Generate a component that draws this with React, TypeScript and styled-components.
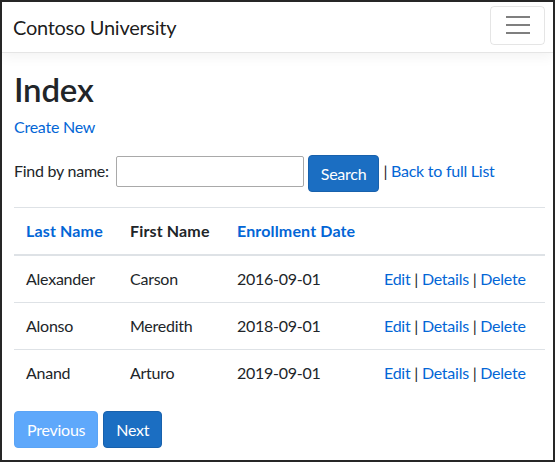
import React from "react";
import styled, { createGlobalStyle } from "styled-components";

const Global = createGlobalStyle`
  html, body { margin: 0; padding: 0; background: #fff; }
  body {
    font-family: Lato, "Noto Sans", "Liberation Sans", sans-serif;
    font-size: 16px;
    letter-spacing: -0.25px;
    color: #212529;
  }
  * { box-sizing: border-box; }
`;

const Frame = styled.div`
  width: 555px;
  height: 462px;
  border: 2px solid #262626;
  display: flex;
  flex-direction: column;
  overflow: hidden;
  background: #fff;
`;

const Navbar = styled.header`
  height: 51px;
  flex: none;
  display: flex;
  align-items: center;
  justify-content: space-between;
  padding: 0 8px 0 11px;
  border-bottom: 1px solid #e5e5e5;
  box-shadow: 0 4px 12px rgba(0, 0, 0, 0.05);
`;

const Brand = styled.a`
  font-size: 20px;
  line-height: 30px;
  letter-spacing: -0.28px;
  color: rgba(0, 0, 0, 0.9);
  text-decoration: none;
  margin-top: -1px;
`;

const Toggler = styled.button`
  width: 55px;
  height: 39px;
  margin-top: -4px;
  border: 1px solid rgba(0, 0, 0, 0.1);
  border-radius: 4px;
  background: transparent;
  display: flex;
  flex-direction: column;
  align-items: center;
  justify-content: center;
  gap: 6px;
  padding: 0;
`;

const Bar = styled.span`
  display: block;
  width: 24px;
  height: 2px;
  background: rgba(0, 0, 0, 0.5);
`;

const Main = styled.main`
  padding: 0 8px 0 12px;
  display: flex;
  flex-direction: column;
`;

const Title = styled.h1`
  margin: 16px 0 0;
  font-size: 33px;
  line-height: 41px;
  font-weight: 600;
  letter-spacing: -0.2px;
`;

const Link = styled.a`
  color: #0366d6;
  text-decoration: none;
`;

const CreateLine = styled.p`
  margin: 5px 0 0;
  line-height: 24px;
`;

const SearchForm = styled.form`
  margin-top: 16px;
  display: flex;
  align-items: flex-start;
  line-height: 24px;
`;

const Label = styled.label`
  margin-top: 4px;
  margin-right: 7px;
`;

const TextInput = styled.input`
  width: 188px;
  height: 31px;
  margin-top: 1px;
  border: 1px solid #a9a9a9;
  border-radius: 2px;
  font: inherit;
  padding: 0 4px;
`;

const Btn = styled.button<{ $light?: boolean }>`
  height: 37px;
  padding: 0 12px;
  border: 1px solid ${(p) => (p.$light ? "#5aa4f6" : "#1861ac")};
  border-radius: 4px;
  background: ${(p) => (p.$light ? "#5ea8fb" : "#1b6ec2")};
  color: #fff;
  font: inherit;
  letter-spacing: inherit;
  line-height: 24px;
`;

const SearchBtn = styled(Btn)`
  margin-left: 4px;
`;

const After = styled.span`
  margin-top: 4px;
  margin-left: 4px;
`;

const Table = styled.table`
  margin-top: 15px;
  width: 531px;
  border-collapse: collapse;
  table-layout: fixed;
  line-height: 24px;
`;

const Th = styled.th<{ $w: number }>`
  width: ${(p) => p.$w}px;
  text-align: left;
  font-weight: 700;
  letter-spacing: 0.15px;
  padding: 11px 12px;
  border-top: 1px solid #dee2e6;
  border-bottom: 2px solid #dee2e6;
`;

const Td = styled.td`
  padding: 11px 12px 11px;
  border-top: 1px solid #dee2e6;
  white-space: nowrap;
`;

const Pager = styled.div`
  margin-top: 15px;
  display: flex;
  gap: 5px;
`;

const students = [
  ["Alexander", "Carson", "2016-09-01"],
  ["Alonso", "Meredith", "2018-09-01"],
  ["Anand", "Arturo", "2019-09-01"],
];

export default function App() {
  return (
    <>
      <Global />
      <Frame>
        <Navbar>
          <Brand href="#">Contoso University</Brand>
          <Toggler aria-label="Toggle navigation">
            <Bar />
            <Bar />
            <Bar />
          </Toggler>
        </Navbar>
        <Main>
          <Title>Index</Title>
          <CreateLine>
            <Link href="#">Create New</Link>
          </CreateLine>
          <SearchForm onSubmit={(e) => e.preventDefault()}>
            <Label>Find by name:</Label>
            <TextInput type="text" />
            <SearchBtn type="submit">Search</SearchBtn>
            <After>
              | <Link href="#">Back to full List</Link>
            </After>
          </SearchForm>
          <Table>
            <thead>
              <tr>
                <Th $w={104}>
                  <Link href="#">Last Name</Link>
                </Th>
                <Th $w={107}>First Name</Th>
                <Th $w={147}>
                  <Link href="#">Enrollment Date</Link>
                </Th>
                <Th $w={173}></Th>
              </tr>
            </thead>
            <tbody>
              {students.map(([last, first, date]) => (
                <tr key={last}>
                  <Td>{last}</Td>
                  <Td>{first}</Td>
                  <Td>{date}</Td>
                  <Td>
                    <Link href="#">Edit</Link> | <Link href="#">Details</Link> |{" "}
                    <Link href="#">Delete</Link>
                  </Td>
                </tr>
              ))}
            </tbody>
          </Table>
          <Pager>
            <Btn $light>Previous</Btn>
            <Btn>Next</Btn>
          </Pager>
        </Main>
      </Frame>
    </>
  );
}
